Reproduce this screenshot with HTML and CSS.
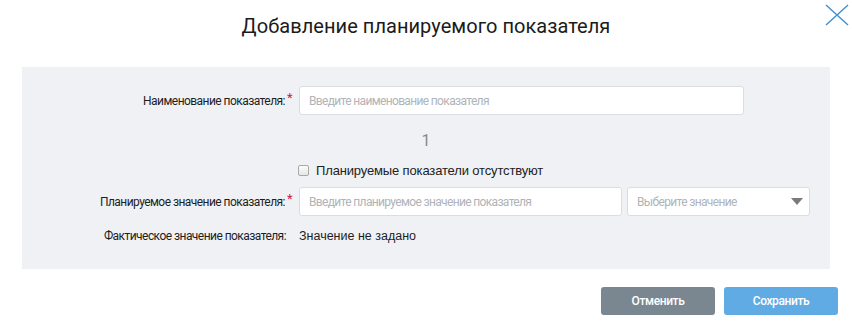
FILE: index.html
```html
<!DOCTYPE html>
<html lang="ru">

<head>
    <meta charset="UTF-8">
    <meta name="viewport" content="width=device-width, initial-scale=1.0">
    <title>Добавление планируемого показателя</title>
    <link rel="stylesheet" href="styles.css">
</head>

<body>
    <div class="modal">
        <div class="modal-header">
            <h1 class="modal-title">Добавление планируемого показателя</h1>
            <button class="close" title="Закрыть">
                <svg width="24" height="22" viewBox="0 0 24 22">
                    <path d="M1 1 L23 21 M23 1 L1 21" stroke="#3d8fd6" stroke-width="1.4" fill="none" />
                </svg>
            </button>
        </div>

        <div class="panel">
            <div class="row">
                <label class="label">Наименование показателя:<span class="req">*</span></label>
                <input class="field field-wide" type="text" placeholder="Введите наименование показателя">
            </div>

            <div class="counter">1</div>

            <div class="row row-check">
                <span class="label"></span>
                <label class="check">
                    <input type="checkbox">
                    <span>Планируемые показатели отсутствуют</span>
                </label>
            </div>

            <div class="row">
                <label class="label">Планируемое значение показателя:<span class="req">*</span></label>
                <input class="field field-value" type="text" placeholder="Введите планируемое значение показателя">
                <div class="select">
                    <span>Выберите значение</span>
                    <i class="arrow"></i>
                </div>
            </div>

            <div class="row row-text">
                <span class="label label-plain">Фактическое значение показателя:</span>
                <span class="value">Значение не задано</span>
            </div>
        </div>

        <div class="actions">
            <button class="btn btn-cancel">Отменить</button>
            <button class="btn btn-save">Сохранить</button>
        </div>
    </div>
</body>

</html>
```

FILE: styles.css
```css
body {
    margin: 0;
    background: #fff;
    font-family: Roboto, "Liberation Sans", sans-serif;
    color: #222;
}

.modal {
    width: 852px;
}

.modal-header {
    position: relative;
    height: 67px;
    display: flex;
    justify-content: center;
}

.modal-title {
    margin: 13px 0 0;
    font-size: 20px;
    font-weight: 400;
    line-height: 26px;
    letter-spacing: 0.05px;
    color: #1b1b1b;
}

.close {
    position: absolute;
    top: 4px;
    right: 3px;
    padding: 0;
    border: none;
    background: none;
    cursor: pointer;
}

.close svg {
    display: block;
}

/* Серый блок с полями */
.panel {
    margin: 0 22px;
    padding: 19px 0 10px;
    background: #f0f1f5;
    height: 173px;
}

.row {
    display: flex;
    align-items: center;
    gap: 5px;
}

.label {
    width: 270px;
    flex-shrink: 0;
    margin-right: 2px;
    text-align: right;
    font-size: 12px;
    letter-spacing: -0.55px;
    color: #1e1e1e;
}

.label-plain {
    width: 264px;
    margin-right: 8px;
}

.req {
    color: #d6203a;
    margin-left: 2px;
    position: relative;
    top: -3px;
    font-size: 13px;
}

.field,
.select {
    box-sizing: border-box;
    height: 29px;
    padding: 0 9px;
    background: #fff;
    border: 1px solid #dcdde0;
    border-radius: 3px;
    font-family: Roboto, sans-serif;
    font-size: 12px;
    letter-spacing: -0.65px;
    color: #333;
    outline: none;
}

.field::placeholder {
    color: #b0b3b8;
}

.field-wide {
    width: 445px;
}

.field-value {
    width: 323px;
}

.select {
    width: 183px;
    display: flex;
    align-items: center;
    justify-content: space-between;
    color: #b0b3b8;
}

.arrow {
    width: 0;
    height: 0;
    border-left: 6px solid transparent;
    border-right: 6px solid transparent;
    border-top: 7px solid #7b7b7b;
    margin-right: -3px;
}

.counter {
    margin-top: 14px;
    text-align: center;
    font-size: 16px;
    line-height: 24px;
    color: #888;
}

.row-check {
    margin: 10px 0 9px;
}

.check {
    display: flex;
    align-items: center;
    gap: 7px;
    margin-left: -1px;
    font-family: "Liberation Sans", Arial, sans-serif;
    font-size: 13px;
    letter-spacing: -0.15px;
    color: #222;
}

.check input {
    appearance: none;
    margin: 0;
    width: 11px;
    height: 11px;
    border: 1px solid #a8a8a8;
    border-radius: 2px;
    background: linear-gradient(#fcfcfc, #e6e6e6);
}

.row-text {
    margin-top: 13px;
    gap: 5px;
}

.value {
    font-family: "Liberation Sans", Arial, sans-serif;
    font-size: 12.5px;
    color: #1e1e1e;
}

.actions {
    display: flex;
    justify-content: flex-end;
    gap: 9px;
    padding: 18px 14px 0 0;
}

.btn {
    width: 114px;
    height: 28px;
    border: none;
    border-radius: 3px;
    color: #fff;
    font-family: Roboto, sans-serif;
    font-size: 12px;
    font-weight: 500;
    letter-spacing: -0.4px;
    cursor: pointer;
}

.btn-cancel {
    background: #7a8791;
}

.btn-save {
    background: #60abe4;
}
```
